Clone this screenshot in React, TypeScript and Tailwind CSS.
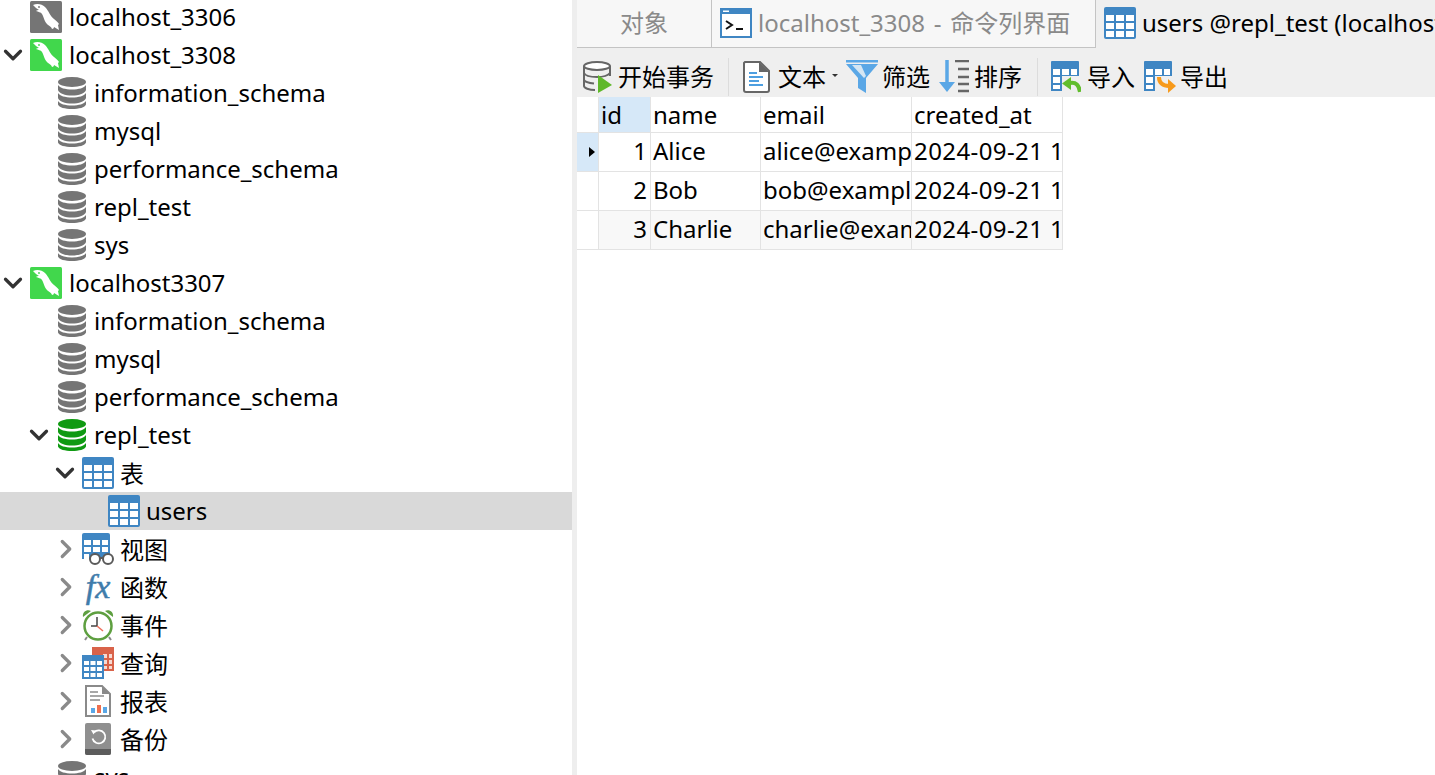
import React from "react";
import { ChevronDown, ChevronRight } from "lucide-react";

const latin = "font-['Noto_Sans','Noto_Sans_CJK_SC',sans-serif]";

// mysql connection icon
const ConnIcon = ({ on }: { on: boolean }) => (
  <svg width="32" height="32" viewBox="0 0 32 32">
    <rect width="32" height="32" rx="1.5" fill={on ? "#41d74c" : "#757575"} />
    <path
      d="M3 4c4-2 9-1 12 2 4 4 5 9 9 12 2 2 4 3 5 5l-1 1 1 5-5-3c0 1-1 2-2 2-1-3-3-3-5-5-3-3-3-7-5-10-1-2-4-2-6-3 1-1 2-1 3-1-2-1-4-3-6-5z"
      fill="#fff"
    />
    <circle cx="9" cy="6" r="0.900" fill={on ? "#41d74c" : "#757575"} />
  </svg>
);

const DbIcon = ({ color = "#757575" }: { color?: string }) => (
  <svg width="28" height="32" viewBox="0 0 28 32">
    <ellipse cx="14" cy="5" rx="14" ry="5" fill={color} />
    <path d="M0 8c2 3 7 4.5 14 4.5S26 11 28 8v5c-1 3.5-7 5.5-14 5.5S1 16.500 0 13z" fill={color} />
    <path d="M0 16c2 3 7 4.500 14 4.500S26 19 28 16v5c-1 3.500-7 5.500-14 5.500S1 24.500 0 21z" fill={color} />
    <path d="M0 24c2 3 7 4.500 14 4.500S26 27 28 24v3.500c-1 3-7 4.500-14 4.500S1 30.500 0 27.500z" fill={color} />
  </svg>
);

const TableIcon = () => (
  <svg className="shrink-0" width="32" height="32" viewBox="0 0 32 32">
    <rect width="32" height="32" rx="2" fill="#3f86c3" />
    <rect x="2" y="8" width="8" height="6" fill="#fff" />
    <rect x="12" y="8" width="8" height="6" fill="#fff" />
    <rect x="22" y="8" width="8" height="6" fill="#fff" />
    <rect x="2" y="16" width="8" height="6" fill="#fff" />
    <rect x="12" y="16" width="8" height="6" fill="#fff" />
    <rect x="22" y="16" width="8" height="6" fill="#fff" />
    <rect x="2" y="24" width="8" height="6" fill="#fff" />
    <rect x="12" y="24" width="8" height="6" fill="#fff" />
    <rect x="22" y="24" width="8" height="6" fill="#fff" />
  </svg>
);

const ViewIcon = () => (
  <svg width="32" height="32" viewBox="0 0 32 32">
    <path d="M0 2a2 2 0 0 1 2-2h24a2 2 0 0 1 2 2v24H0z" fill="#3f86c3" />
    <path d="M2 7h7v5H2zM11 7h7v5h-7zM20 7h6v5h-6zM2 14h7v5H2zM11 14h7v5h-7zM20 14h6v5h-6zM2 21h5v5H2z" fill="#fff" />
    <circle cx="13" cy="26" r="5" fill="#fff" stroke="#5a5a5a" strokeWidth="2" />
    <circle cx="26" cy="26" r="5" fill="#fff" stroke="#5a5a5a" strokeWidth="2" />
    <path d="M18 25h3" stroke="#5a5a5a" strokeWidth="2" />
  </svg>
);

const ClockIcon = () => (
  <svg width="32" height="32" viewBox="0 0 32 32">
    <path d="M1 8c-1-5 4-8 8-6zM31 8c1-5-4-8-8-6z" fill="#5e9f40" />
    <path d="M5 28l-2 3M27 28l2 3" stroke="#8a8a8a" strokeWidth="2" />
    <circle cx="16" cy="17" r="13.500" fill="#fff" stroke="#5e9f40" strokeWidth="2.500" />
    <path d="M15 8v9H9" fill="none" stroke="#444" strokeWidth="1.500" />
    <path d="M15 17l6 5" stroke="#ef6f5c" strokeWidth="1.500" />
  </svg>
);

const QueryIcon = () => (
  <svg width="32" height="32" viewBox="0 0 32 32">
    <rect x="10" y="0" width="22" height="24" fill="#d9634a" />
    <path d="M21 7h4v4h-4zM27 7h3v4h-3zM21 13h4v4h-4zM27 13h3v4h-3zM27 19h3v3h-3zM21 19h4v3h-4z" fill="#f6d9d2" />
    <rect x="0" y="8" width="22" height="24" fill="#3f86c3" />
    <path d="M2 14h5v4H2zM8.500 14h5v4h-5zM15 14h5v4h-5zM2 20h5v4H2zM8.500 20h5v4h-5zM15 20h5v4h-5zM2 26h5v4H2zM8.500 26h5v4h-5zM15 26h5v4h-5z" fill="#fff" />
  </svg>
);

const ReportIcon = () => (
  <svg width="26" height="32" viewBox="0 0 26 32">
    <path d="M1 1h16l8 8v22H1z" fill="#fff" stroke="#8a8a8a" strokeWidth="2" />
    <path d="M17 1v8h8z" fill="#8a8a8a" />
    <path d="M5 7h8M5 11h14M5 15h10" stroke="#8a8a8a" strokeWidth="1.500" />
    <rect x="6" y="23" width="4" height="5" fill="#5aa7e6" />
    <rect x="12" y="20" width="4" height="8" fill="#ef6f4f" />
    <rect x="18" y="22" width="4" height="6" fill="#5aa7e6" />
  </svg>
);

const BackupIcon = () => (
  <svg width="26" height="32" viewBox="0 0 26 32">
    <rect width="26" height="32" rx="2" fill="#8f8f8f" />
    <path d="M0 26h26v4a2 2 0 0 1-2 2H2a2 2 0 0 1-2-2z" fill="#5c5c5c" />
    <path d="M9 9.500a6.500 6.500 0 1 1-1.500 6" fill="none" stroke="#fff" strokeWidth="1.800" />
    <path d="M6 7l5 .5-2.500 4z" fill="#fff" />
  </svg>
);

const FxIcon = () => (
  <span className="flex h-8 w-8 items-center justify-center font-['Liberation_Serif',serif] text-[34px] italic leading-8 text-[#3f7cab] [-webkit-text-stroke:0.5px_#3f7cab]">
    fx
  </span>
);

const Row = ({
  pad,
  gap = 7,
  chevron,
  chevronClass = "",
  icon,
  label,
  cjk,
  selected,
}: {
  pad: string;
  gap?: number;
  chevron?: "down" | "right";
  chevronClass?: string;
  icon: React.ReactNode;
  label: string;
  cjk?: boolean;
  selected?: boolean;
}) => (
  <div className={`relative flex h-[38px] shrink-0 items-center ${pad} ${selected ? "bg-[#d9d9d9]" : ""}`}>
    {chevron === "down" && <ChevronDown size={30} strokeWidth={2.6} className={`absolute text-[#333] ${chevronClass}`} />}
    {chevron === "right" && <ChevronRight size={30} strokeWidth={2.6} className={`absolute text-[#8a8a8a] ${chevronClass}`} />}
    <span className="flex shrink-0 items-center justify-center">{icon}</span>
    <span className={`whitespace-nowrap ${cjk ? "mt-[1px]" : ""}`} style={{ marginLeft: gap }}>
      {label}
    </span>
  </div>
);

const Sidebar = () => (
  <div className="flex h-full w-[572px] shrink-0 flex-col overflow-hidden bg-white text-[24px] text-black">
    <div className="mt-[-2px] flex flex-col">
      <Row pad="pl-[30px]" icon={<ConnIcon on={false} />} label="localhost_3306" />
      <Row pad="pl-[30px]" chevron="down" chevronClass="ml-[-32px]" icon={<ConnIcon on />} label="localhost_3308" />
      <Row pad="pl-[58px]" gap={8} icon={<DbIcon />} label="information_schema" />
      <Row pad="pl-[58px]" gap={8} icon={<DbIcon />} label="mysql" />
      <Row pad="pl-[58px]" gap={8} icon={<DbIcon />} label="performance_schema" />
      <Row pad="pl-[58px]" gap={8} icon={<DbIcon />} label="repl_test" />
      <Row pad="pl-[58px]" gap={8} icon={<DbIcon />} label="sys" />
      <Row pad="pl-[30px]" chevron="down" chevronClass="ml-[-32px]" icon={<ConnIcon on />} label="localhost3307" />
      <Row pad="pl-[58px]" gap={8} icon={<DbIcon />} label="information_schema" />
      <Row pad="pl-[58px]" gap={8} icon={<DbIcon />} label="mysql" />
      <Row pad="pl-[58px]" gap={8} icon={<DbIcon />} label="performance_schema" />
      <Row pad="pl-[58px]" gap={8} chevron="down" chevronClass="ml-[-34px]" icon={<DbIcon color="#0f9a12" />} label="repl_test" />
      <Row pad="pl-[82px]" gap={6} cjk chevron="down" chevronClass="ml-[-32px]" icon={<TableIcon />} label="表" />
      <Row pad="pl-[108px]" gap={6} icon={<TableIcon />} label="users" selected />
      <Row pad="pl-[82px]" gap={6} cjk chevron="right" chevronClass="ml-[-31px]" icon={<ViewIcon />} label="视图" />
      <Row pad="pl-[82px]" gap={6} cjk chevron="right" chevronClass="ml-[-31px]" icon={<FxIcon />} label="函数" />
      <Row pad="pl-[82px]" gap={6} cjk chevron="right" chevronClass="ml-[-31px]" icon={<ClockIcon />} label="事件" />
      <Row pad="pl-[82px]" gap={6} cjk chevron="right" chevronClass="ml-[-31px]" icon={<QueryIcon />} label="查询" />
      <Row pad="pl-[85px]" gap={9} cjk chevron="right" chevronClass="ml-[-34px]" icon={<ReportIcon />} label="报表" />
      <Row pad="pl-[85px]" gap={9} cjk chevron="right" chevronClass="ml-[-34px]" icon={<BackupIcon />} label="备份" />
      <Row pad="pl-[58px]" gap={8} icon={<DbIcon />} label="sys" />
    </div>
  </div>
);

const TermIcon = () => (
  <svg width="32" height="30" viewBox="0 0 32 30">
    <rect x="1" y="1" width="30" height="28" fill="#fff" stroke="#3f86c3" strokeWidth="2" />
    <rect x="1" y="1" width="30" height="5" fill="#3f86c3" />
    <rect x="3" y="2.500" width="6" height="1.500" fill="#fff" />
    <path d="M6 13l6 4-6 4" fill="none" stroke="#111" strokeWidth="2" />
    <path d="M16 21h7" stroke="#111" strokeWidth="2" />
  </svg>
);

const TabBar = () => (
  <div className="flex h-[48px] shrink-0 border-b border-[#c4c4c4] text-[24px]">
    <div className="flex w-[135px] items-center justify-center border-r border-[#c4c4c4] bg-[#f7f7f7] pb-[2px] text-[#8a8a8a]">
      对象
    </div>
    <div className="flex w-[384px] items-center border-r border-[#c4c4c4] bg-[#f7f7f7] pb-[2px] pl-[8px] text-[#8a8a8a]">
      <TermIcon />
      <span className="ml-[6px] whitespace-nowrap [word-spacing:2.5px]">localhost_3308 - 命令列界面</span>
    </div>
    <div className="relative z-10 mb-[-1px] flex min-w-0 flex-1 items-center overflow-hidden bg-[#efefef] pb-[2px] pl-[8px] text-black">
      <TableIcon />
      <span className="ml-[6px] whitespace-nowrap">users @repl_test (localhost_3308)</span>
    </div>
  </div>
);

const Sep = () => <div className="h-[38px] w-px shrink-0 bg-[#dcdcdc]" />;

const ToolBar = () => (
  <div className="flex h-[49px] shrink-0 items-center bg-[#efefef] pt-2 text-[24px] text-black">
    <div className="ml-[6px] flex items-center">
      <svg width="30" height="32" viewBox="0 0 30 32">
        <ellipse cx="14" cy="5" rx="13" ry="4" fill="#fff" stroke="#666" strokeWidth="2" />
        <path d="M1 5v20c0 2 5 4 11 4M27 5v10M1 12c1 2.500 6 4 13 4 6 0 11-1.500 13-4M1 19c1 2 5 3 10 3.500" fill="none" stroke="#666" strokeWidth="2" />
        <path d="M15 14l14 10-14 8z" fill="#5fb82a" />
      </svg>
      <span className="ml-[5px]">开始事务</span>
    </div>
    <div className="mx-[14px]"><Sep /></div>
    <svg width="27" height="32" viewBox="0 0 27 32">
      <path d="M2 1h15l9 9v19a2 2 0 0 1-2 2H3a2 2 0 0 1-2-2V2z" fill="#fff" stroke="#666" strokeWidth="2" />
      <path d="M16 1v10h10z" fill="#666" />
      <path d="M6 12h8M6 16h14M6 20h10M6 24h14" stroke="#4e9fe0" strokeWidth="2" />
    </svg>
    <span className="ml-[8px]">文本</span>
    <span className="mb-[2px] ml-[6px] h-0 w-0 border-x-[3px] border-t-[3px] border-x-transparent border-t-[#333]" />
    <svg className="ml-[8px]" width="32" height="34" viewBox="0 0 32 34">
      <path d="M0 0h32v2.500H0z" fill="#5aa7e6" />
      <path d="M0 4h32L20 18v15l-8-5V18z" fill="#5aa7e6" />
      <path d="M6 5h9l5 11-2 2z" fill="#d5e6f3" />
    </svg>
    <span className="ml-[4px]">筛选</span>
    <svg className="ml-[9px]" width="32" height="34" viewBox="0 0 32 34">
      <path d="M8 0v24" stroke="#5aa7e6" strokeWidth="3.500" />
      <path d="M0 22h16l-8 10z" fill="#5aa7e6" />
      <path d="M16 1h14M19 9h11M19 17h11M19 24h11M19 31h11" stroke="#666" strokeWidth="2.500" />
    </svg>
    <span className="ml-[3px]">排序</span>
    <div className="ml-[15px] mr-[13px]"><Sep /></div>
    <svg width="30" height="32" viewBox="0 0 30 32">
      <path d="M0 1a1 1 0 0 1 1-1h26a1 1 0 0 1 1 1v14H11v15H0z" fill="#3f86c3" />
      <path d="M2 8h7v6H2zM11 8h7v6h-7zM20 8h6v6h-6zM2 16h7v6H2zM2 24h7v4H2z" fill="#fff" />
      <path d="M19 22c6-1 9 2 10 9" fill="none" stroke="#61bd2c" strokeWidth="4" />
      <path d="M20 16v13l-9-6.500z" fill="#61bd2c" />
    </svg>
    <span className="ml-[6px]">导入</span>
    <svg className="ml-[9px]" width="32" height="32" viewBox="0 0 32 32">
      <path d="M0 1a1 1 0 0 1 1-1h26a1 1 0 0 1 1 1v14H11v15H0z" fill="#3f86c3" />
      <path d="M2 8h7v6H2zM11 8h7v6h-7zM20 8h6v6h-6zM2 16h7v6H2zM2 24h7v4H2z" fill="#fff" />
      <path d="M15 16c0 6 4 9 10 9" fill="none" stroke="#f79a1c" strokeWidth="4" />
      <path d="M24 18l8 7-8 7z" fill="#f79a1c" />
    </svg>
    <span className="ml-[4px]">导出</span>
  </div>
);

const rows = [
  { id: 1, name: "Alice", email: "alice@example.com", at: "2024-09-21 13:35:22" },
  { id: 2, name: "Bob", email: "bob@example.com", at: "2024-09-21 13:35:22" },
  { id: 3, name: "Charlie", email: "charlie@example.com", at: "2024-09-21 13:35:22" },
];

const cell = "flex items-center overflow-hidden whitespace-nowrap border-r border-b border-[#e3e3e3] pl-[2px]";

const DataGrid = () => (
  <div className="grid w-[486px] grid-cols-[22px_52px_110px_151px_151px] grid-rows-[36px_39px_39px_39px] text-[24px] text-black">
    <div className={`${cell} bg-white`} />
    <div className={`${cell} bg-[#d6e8f8]`}>id</div>
    <div className={cell}>name</div>
    <div className={cell}>email</div>
    <div className={cell}>created_at</div>
    {rows.map((r, i) => {
      const bg = i === 2 ? "bg-[#f8f8f8]" : "bg-white";
      return (
        <React.Fragment key={r.id}>
          <div className={`${cell} justify-center ${i === 0 ? "bg-[#d6e8f8]" : "bg-white"}`}>
            {i === 0 && <span className="ml-[6px] h-0 w-0 border-y-[5px] border-l-[6px] border-y-transparent border-l-black" />}
          </div>
          <div className={`${cell} justify-end pb-[2px] pr-[3px] ${bg}`}>{r.id}</div>
          <div className={`${cell} pb-[2px] ${bg}`}>{r.name}</div>
          <div className={`${cell} pb-[2px] ${bg}`}>{r.email}</div>
          <div className={`${cell} pb-[2px] tracking-[0.4px] ${bg}`}>{r.at}</div>
        </React.Fragment>
      );
    })}
  </div>
);

export default function App() {
  return (
    <div className={`flex h-[775px] w-[1435px] overflow-hidden bg-white ${latin}`}>
      <Sidebar />
      <div className="w-[5px] shrink-0 bg-[#eeeeee]" />
      <div className="flex min-w-0 flex-1 flex-col">
        <TabBar />
        <ToolBar />
        <DataGrid />
      </div>
    </div>
  );
}
